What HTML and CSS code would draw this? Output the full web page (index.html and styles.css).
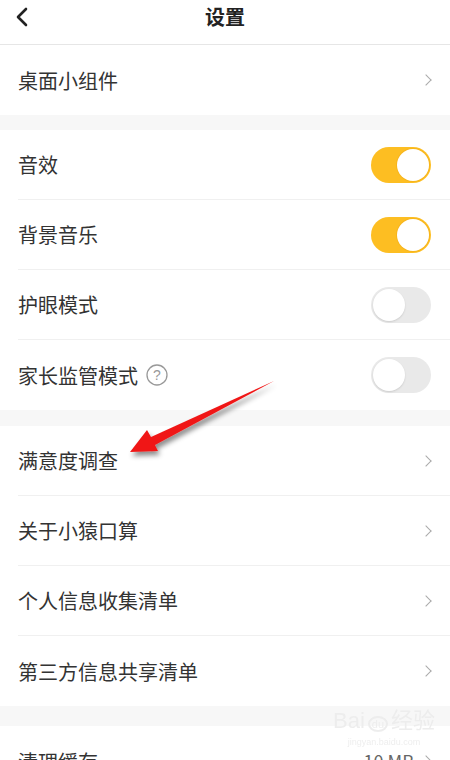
FILE: index.html
```html
<!DOCTYPE html>
<html lang="zh-CN">
<head>
  <meta charset="UTF-8">
  <meta name="viewport" content="width=device-width, initial-scale=1.0">
  <title>设置</title>
  <link rel="stylesheet" href="styles.css">
</head>
<body>
  <div class="page">
    <div class="header">
      <svg class="back" width="14" height="20" viewBox="0 0 14 20">
        <path d="M11 2 L3 10 L11 18" fill="none" stroke="#222" stroke-width="2.6" stroke-linecap="round" stroke-linejoin="round"/>
      </svg>
      <div class="title">设置</div>
    </div>

    <div class="group">
      <div class="row"><span class="label">桌面小组件</span><span class="chev"></span></div>
    </div>
    <div class="gap"></div>

    <div class="group">
      <div class="row"><span class="label">音效</span><span class="switch on"></span></div>
      <div class="row"><span class="label">背景音乐</span><span class="switch on"></span></div>
      <div class="row"><span class="label">护眼模式</span><span class="switch"></span></div>
      <div class="row">
        <span class="label">家长监管模式
          <svg class="help" width="22" height="22" viewBox="0 0 22 22">
            <circle cx="11" cy="11" r="10" fill="none" stroke="#999" stroke-width="1.3"/>
            <text x="11" y="16" text-anchor="middle" font-size="14" fill="#999" font-family="Liberation Sans, sans-serif">?</text>
          </svg>
        </span>
        <span class="switch"></span>
      </div>
    </div>
    <div class="gap gap-m"></div>

    <div class="group">
      <div class="row"><span class="label">满意度调查</span><span class="chev"></span></div>
      <div class="row"><span class="label">关于小猿口算</span><span class="chev"></span></div>
      <div class="row"><span class="label">个人信息收集清单</span><span class="chev"></span></div>
      <div class="row"><span class="label">第三方信息共享清单</span><span class="chev"></span></div>
    </div>
    <div class="gap gap-l"></div>

    <div class="group">
      <div class="row"><span class="label">清理缓存</span><span class="value">10 MB</span><span class="chev"></span></div>
    </div>

    <!-- 标注箭头 -->
    <svg class="arrow" width="450" height="760" viewBox="0 0 450 760">
      <defs>
        <filter id="shadow" x="-20%" y="-20%" width="140%" height="140%">
          <feDropShadow dx="2" dy="4" stdDeviation="2.5" flood-color="#000" flood-opacity="0.45"/>
        </filter>
      </defs>
      <path d="M274 381 L155 445 L158 451 L130 452 L147 430 L151 437 Z" fill="#f01818" filter="url(#shadow)"/>
    </svg>

    <div class="watermark">
      <div class="wm-logo">Bai<span class="paw">du</span>经验</div>
      <div class="wm-url">jingyan.baidu.com</div>
    </div>
  </div>
</body>
</html>
```

FILE: styles.css
```css
* {
  box-sizing: border-box;
}
body {
  margin: 0;
  background: #fff;
  font-family: "Noto Sans CJK SC", "Noto Sans", sans-serif;
  color: #333;
}
.page {
  position: relative;
  width: 450px;
  height: 760px;
  overflow: hidden;
}
.header {
  height: 45px;
  display: flex;
  align-items: center;
  justify-content: center;
  border-bottom: 1px solid #e6e6e6;
  position: relative;
  padding-bottom: 10px;
}
.back {
  position: absolute;
  left: 15px;
  top: 7px;
}
.title {
  font-size: 20px;
  font-weight: bold;
  color: #222;
  line-height: 24px;
}
.row {
  height: 70px;
  margin-left: 18px;
  padding-right: 16px;
  display: flex;
  align-items: center;
  border-bottom: 1px solid #f0f0f0;
}
.group .row:last-child {
  border-bottom: none;
}
.label {
  flex: 1;
  font-size: 20px;
  color: #333;
  display: flex;
  align-items: center;
}
.help {
  margin-left: 8px;
}
.value {
  font-size: 18px;
  color: #666;
  margin-right: 8px;
}
.chev {
  width: 8px;
  height: 8px;
  border-top: 1.5px solid #aaa;
  border-right: 1.5px solid #aaa;
  transform: rotate(45deg);
  margin-right: 4px;
}
.gap {
  height: 15px;
  background: #f7f7f7;
}
.gap-m {
  height: 16px;
}
.gap-l {
  height: 20px;
}
.switch {
  position: relative;
  width: 60px;
  height: 36px;
  border-radius: 18px;
  background: #e9e9e9;
  margin-right: 3px;
}
.switch::after {
  content: "";
  position: absolute;
  top: 2px;
  left: 2px;
  width: 32px;
  height: 32px;
  border-radius: 50%;
  background: #fff;
  box-shadow: 0 1px 2px rgba(0, 0, 0, 0.12);
}
.switch.on {
  background: #fdbe22;
}
.switch.on::after {
  left: 26px;
  box-shadow: 0 0 0 1px #f7b51c;
}
.arrow {
  position: absolute;
  left: 0;
  top: 0;
  pointer-events: none;
}
.watermark {
  position: absolute;
  left: 333px;
  top: 708px;
  color: #ececec;
  font-family: "Liberation Sans", sans-serif;
  text-align: center;
  opacity: 0.9;
}
.wm-logo {
  font-size: 22px;
  line-height: 26px;
}
.paw {
  font-size: 11px;
  border: 2px solid #ececec;
  border-radius: 50%;
  padding: 0 2px;
  margin: 0 3px;
}
.wm-url {
  font-size: 9px;
  line-height: 11px;
}
```
